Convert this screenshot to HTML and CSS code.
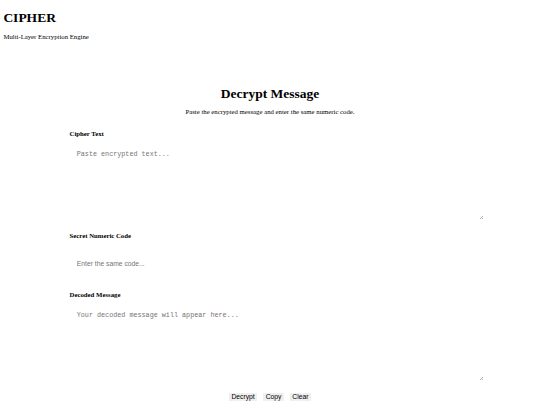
FILE: index.html
```html
<!DOCTYPE html>
<html lang="en">
<head>
<meta charset="utf-8">
<title>Cipher</title>
<link rel="stylesheet" href="styles.css">
</head>
<body class="page">
<header class="site-header">
  <h1 class="brand">CIPHER</h1>
  <p class="tagline">Multi-Layer Encryption Engine</p>
</header>
<main class="panel">
  <h2 class="panel-title">Decrypt Message</h2>
  <p class="panel-intro">Paste the encrypted message and enter the same numeric code.</p>
  <div class="field">
    <label class="field-label" for="cipher">Cipher Text</label>
    <div class="area-wrap">
      <textarea id="cipher" class="field-area" placeholder="Paste encrypted text..."></textarea>
    </div>
  </div>
  <div class="field">
    <label class="field-label" for="code">Secret Numeric Code</label>
    <input id="code" class="field-input" type="text" placeholder="Enter the same code...">
  </div>
  <div class="field">
    <label class="field-label" for="output">Decoded Message</label>
    <div class="area-wrap">
      <textarea id="output" class="field-area" placeholder="Your decoded message will appear here..." readonly></textarea>
    </div>
  </div>
  <div class="actions">
    <button class="btn" type="button">Decrypt</button>
    <button class="btn" type="button">Copy</button>
    <button class="btn" type="button">Clear</button>
  </div>
</main>
</body>
</html>
```
FILE: styles.css
```css
html {
  background: #fff;
}

.page {
  margin: 3.375px;
  font-family: "Liberation Serif", "Times New Roman", serif;
  font-size: 6.75px;
  line-height: 1.15;
  color: #000;
  background: #fff;
}

.brand {
  font-size: 13.5px;
  line-height: 1.15;
  font-weight: bold;
  margin: 6.5px 0 8px;
}

.tagline {
  margin: 6.75px 0;
}

.panel {
  width: 400.8px;
  margin: 44.8px auto 0;
}

.panel-title {
  text-align: center;
  font-size: 13.5px;
  line-height: 1.15;
  font-weight: bold;
  margin: 0;
}

.panel-intro {
  text-align: center;
  margin: 6.75px 0 14.4px;
}

.field {
  margin-bottom: 10.97px;
}

.field-label {
  display: block;
  font-weight: bold;
  margin-bottom: 4.64px;
}

.area-wrap {
  position: relative;
}

.area-wrap::after {
  content: "";
  position: absolute;
  right: -12.8px;
  bottom: 1.3px;
  width: 3.4px;
  height: 3.4px;
  background:
    linear-gradient(135deg, transparent 44%, #b5b5b5 44%, #b5b5b5 56%, transparent 56%),
    linear-gradient(135deg, transparent 74%, #b5b5b5 74%, #b5b5b5 88%, transparent 88%);
  pointer-events: none;
}

.field-area {
  display: block;
  box-sizing: content-box;
  width: 100%;
  height: 62.3px;
  margin: 0;
  padding: 8.4px 7.17px 7.17px;
  border: none;
  outline: none;
  resize: none;
  background: #fff;
  font-family: "Liberation Mono", "DejaVu Sans Mono", monospace;
  font-size: 6.75px;
  line-height: 1.13;
  color: #000;
}

.field-input {
  display: block;
  box-sizing: content-box;
  width: 100%;
  height: 7.76px;
  margin: 0;
  padding: 15.4px 7.17px 13.3px;
  border: none;
  outline: none;
  background: #fff;
  font-family: "Liberation Sans", Arial, sans-serif;
  font-size: 6.75px;
  line-height: 1.15;
  color: #000;
}

.actions {
  display: flex;
  justify-content: center;
  gap: 5.9px;
  margin-top: 0.2px;
}

.btn {
  margin: 0;
  padding: 0.42px 2.53px;
  border: none;
  border-radius: 0;
  background: #efefef;
  color: #000;
  font-family: "Liberation Sans", Arial, sans-serif;
  font-size: 6.75px;
  line-height: 1.15;
}
```
